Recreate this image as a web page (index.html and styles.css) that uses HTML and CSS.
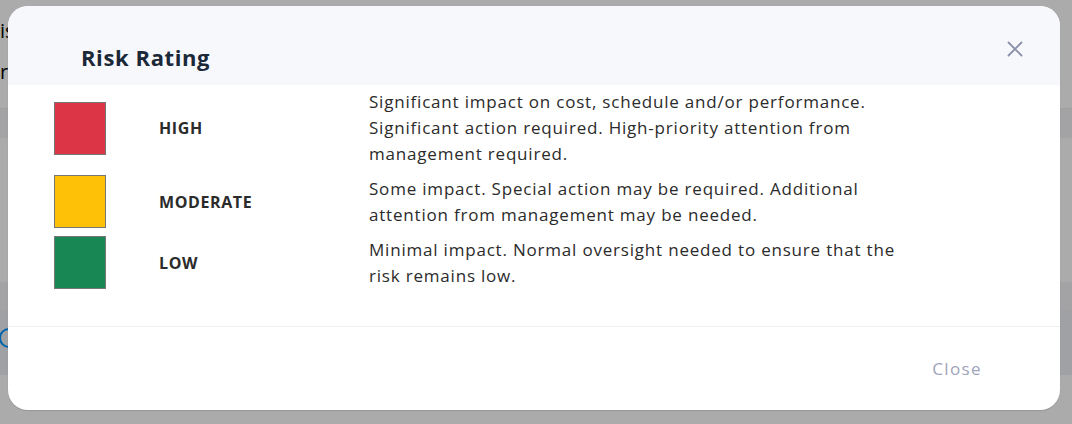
FILE: index.html
```html
<!DOCTYPE html>
<html>
<head>
<meta charset="utf-8">
<link rel="stylesheet" href="styles.css">
</head>
<body>
<div class="page">
  <div class="page-line t1">is</div>
  <div class="page-line t2">re</div>
  <div class="band b1"></div>
  <div class="band b2"></div>
  <div class="band b3"><span class="info-ring"></span></div>
</div>
<div class="overlay"></div>
<div class="modal">
  <div class="modal-header">
    <h2 class="modal-title">Risk Rating</h2>
    <button class="btn-x" aria-label="Close">
      <svg width="16" height="16" viewBox="0 0 16 16"><path d="M1.5 1.5 L14.5 14.5 M14.5 1.5 L1.5 14.5" stroke="#8a90a8" stroke-width="1.8" stroke-linecap="round" fill="none"/></svg>
    </button>
  </div>
  <div class="modal-body">
    <table class="legend">
      <tr>
        <td class="c-swatch"><span class="swatch high"></span></td>
        <td class="c-label">HIGH</td>
        <td class="c-desc">Significant impact on cost, schedule and/or performance. Significant action required. High-priority attention from management required.</td>
      </tr>
      <tr>
        <td class="c-swatch"><span class="swatch moderate"></span></td>
        <td class="c-label">MODERATE</td>
        <td class="c-desc">Some impact. Special action may be required. Additional attention from management may be needed.</td>
      </tr>
      <tr>
        <td class="c-swatch"><span class="swatch low"></span></td>
        <td class="c-label">LOW</td>
        <td class="c-desc">Minimal impact. Normal oversight needed to ensure that the risk remains low.</td>
      </tr>
    </table>
  </div>
  <div class="modal-footer">
    <button class="btn-close">Close</button>
  </div>
</div>
</body>
</html>
```
FILE: styles.css
```css
* { box-sizing: border-box; }
html, body { margin: 0; padding: 0; }
body {
  width: 1072px;
  height: 424px;
  overflow: hidden;
  font-family: "Open Sans", "Liberation Sans", sans-serif;
  background: #fff;
  position: relative;
}
.page {
  display: flex;
  flex-direction: column;
  height: 424px;
  color: #000;
  font-size: 20px;
}
.page-line {
  padding-left: 0;
  font-weight: 400;
}
.page-line.t1 { height: 48px; padding-top: 17px; }
.page-line.t2 { height: 60px; padding-top: 10px; }
.band.b1 { height: 30px; background: #f4f4f8; border-top: 1px solid #eee; }
.band.b2 { margin-top: 144px; height: 28px; background: #f4f4f8; }
.band.b3 { height: 65px; background: #eef0f6; position: relative; }
.info-ring {
  position: absolute;
  left: -1px; top: 18px;
  width: 20px; height: 20px;
  border: 2px solid #0096ff;
  border-radius: 50%;
}
.overlay {
  position: absolute;
  inset: 0;
  background: rgba(0,0,0,0.33);
}
.modal {
  position: absolute;
  left: 8px;
  top: 6px;
  width: 1052px;
  height: 404px;
  background: #fff;
  border-radius: 20px;
  overflow: hidden;
  display: flex;
  flex-direction: column;
  box-shadow: 0 1px 1px rgba(0,0,0,0.12);
}
.modal-header {
  height: 79px;
  background: #f7f8fc;
  display: flex;
  align-items: flex-start;
  justify-content: space-between;
  padding: 36px 37px 0 73px;
}
.modal-title {
  margin: 0;
  font-size: 22px;
  line-height: 30px;
  font-weight: 700;
  color: #1b2838;
  letter-spacing: 0.6px;
}
.btn-x {
  border: 0;
  background: none;
  padding: 0;
  width: 16px;
  height: 16px;
  margin-top: -1px;
  display: flex;
}
.modal-body {
  flex: 1;
  padding: 0 0 0 46px;
}
.legend {
  border-collapse: collapse;
}
.legend td {
  padding: 4px 0;
  vertical-align: middle;
}
.c-swatch { width: 105px; }
.swatch {
  display: block;
  width: 52px;
  height: 53px;
  border: 1px solid #777;
}
.swatch.high { background: #dc3545; }
.swatch.moderate { background: #ffc107; }
.swatch.low { background: #198754; }
.c-label {
  width: 210px;
  font-size: 16px;
  font-weight: 700;
  letter-spacing: 0.6px;
  color: #2b2b2b;
}
.c-desc {
  width: 540px;
  font-size: 17px;
  line-height: 26px;
  letter-spacing: 0.8px;
  color: #2b2b2b;
}
.modal-footer {
  height: 84px;
  border-top: 1px solid #efefef;
  display: flex;
  align-items: center;
  justify-content: flex-end;
  padding-right: 78px;
}
.btn-close {
  border: 0;
  background: none;
  font-family: inherit;
  font-size: 17px;
  letter-spacing: 1.4px;
  color: #a0a4bc;
  padding: 0;
}
```
